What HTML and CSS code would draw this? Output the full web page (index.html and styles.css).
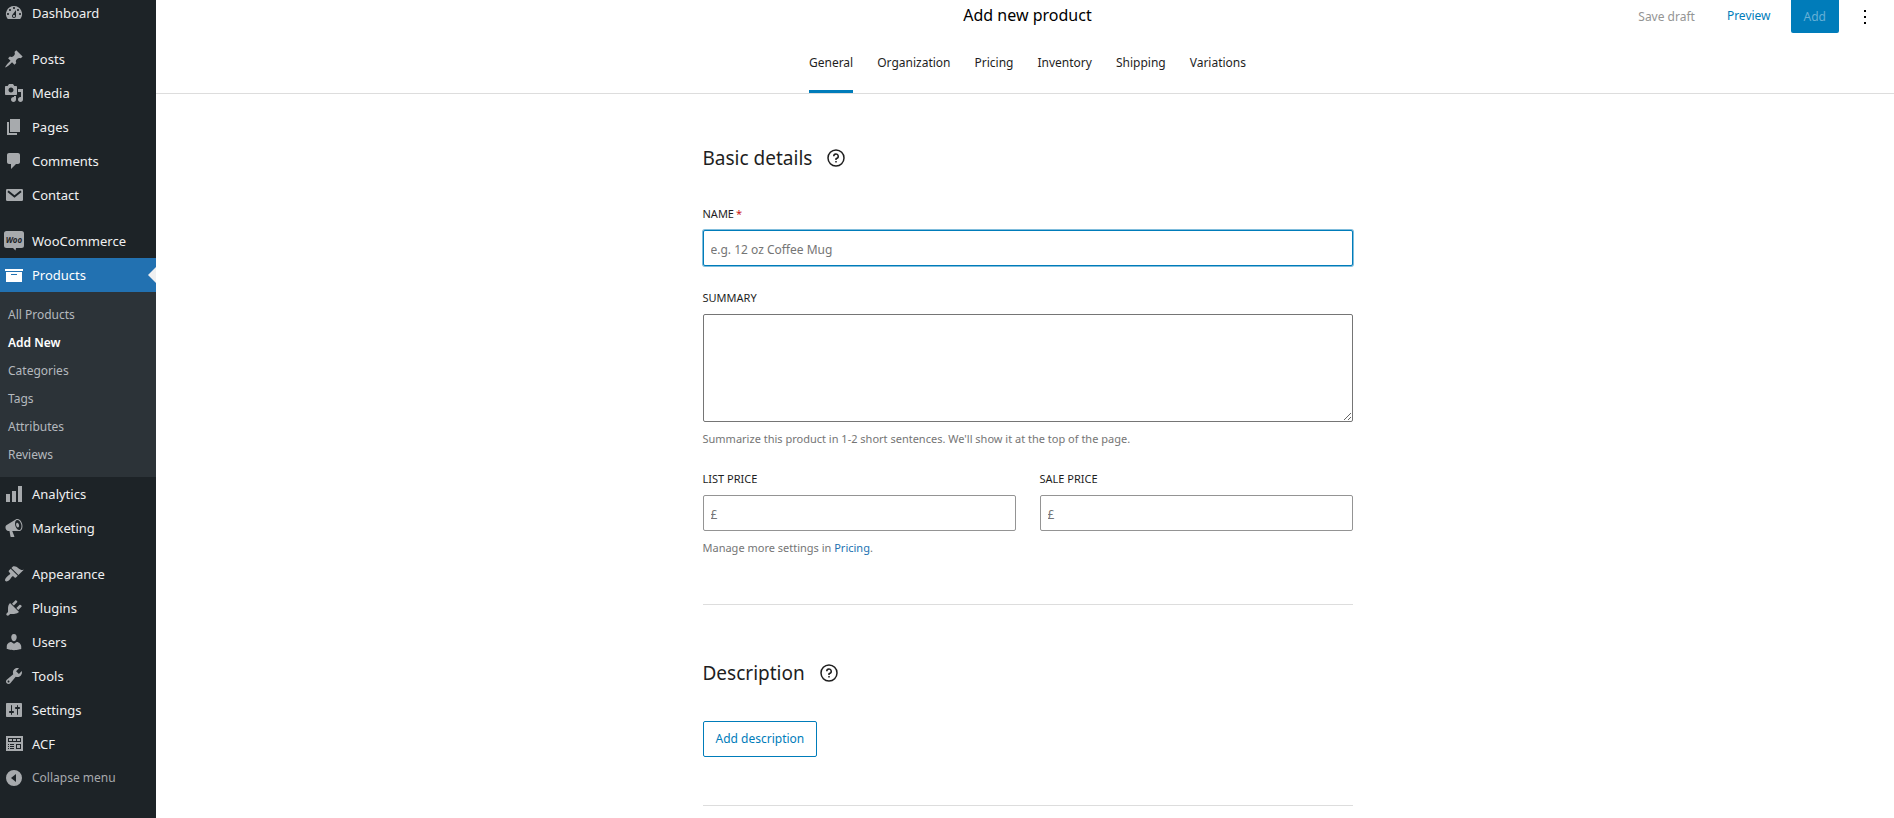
FILE: index.html
```html
<!DOCTYPE html>
<html lang="en">
<head>
<meta charset="utf-8">
<title>Add new product</title>
<link rel="stylesheet" href="styles.css">
</head>
<body>
<div class="app">
  <nav class="sidebar" aria-label="Main menu">
    <ul class="menu">
      <li><a class="menu-item" href="#"><svg class="icon" viewBox="0 0 20 20"><path fill-rule="evenodd" d="M3.76 16h12.48A7.998 7.998 0 0 0 10 3a7.998 7.998 0 0 0-6.24 13zM10 4c.55 0 1 .45 1 1s-.45 1-1 1-1-.45-1-1 .45-1 1-1zM6 6c.55 0 1 .45 1 1s-.45 1-1 1-1-.45-1-1 .45-1 1-1zm8 0c.55 0 1 .45 1 1s-.45 1-1 1-1-.45-1-1 .45-1 1-1zm-5.37 5.55L12 7v6c0 1.1-.9 2-2 2s-2-.9-2-2c0-.57.24-1.08.63-1.45zM4 10c.55 0 1 .45 1 1s-.45 1-1 1-1-.45-1-1 .45-1 1-1zm12 0c.55 0 1 .45 1 1s-.45 1-1 1-1-.45-1-1 .45-1 1-1zm-5 3c0-.55-.45-1-1-1s-1 .45-1 1 .45 1 1 1 1-.45 1-1z"/></svg>Dashboard</a></li>
      <li class="group-start"><a class="menu-item" href="#"><svg class="icon" viewBox="0 0 20 20"><path d="M10.44 3.02l1.82-1.82 6.36 6.35-1.83 1.82c-1.05-.68-2.48-.57-3.41.36l-.75.75c-.92.93-1.04 2.35-.35 3.41l-1.83 1.82-2.41-2.41-2.8 2.79c-.42.42-3.38 2.71-3.8 2.29s1.86-3.39 2.28-3.81l2.79-2.79L4.1 9.36l1.83-1.82c1.05.69 2.48.57 3.4-.36l.75-.75c.93-.92 1.05-2.35.36-3.41z"/></svg>Posts</a></li>
      <li><a class="menu-item" href="#"><svg class="icon" viewBox="0 0 20 20"><path fill-rule="evenodd" d="M13 11V4c0-.55-.45-1-1-1h-1.67L9 1H5L3.67 3H2c-.55 0-1 .45-1 1v7c0 .55.45 1 1 1h10c.55 0 1-.45 1-1zM7 4.5c1.38 0 2.5 1.12 2.5 2.5S8.38 9.5 7 9.5 4.5 8.38 4.5 7 5.62 4.5 7 4.5zM14 6h5v10.5c0 1.38-1.12 2.5-2.5 2.5S14 17.88 14 16.5s1.12-2.5 2.5-2.5c.17 0 .34.02.5.05V9h-3V6zm-4 8.05V13h2v3.5c0 1.38-1.12 2.5-2.5 2.5S7 17.88 7 16.5 8.12 14 9.5 14c.17 0 .34.02.5.05z"/></svg>Media</a></li>
      <li><a class="menu-item" href="#"><svg class="icon" viewBox="0 0 20 20"><path d="M6 15V2h10v13H6zm-1 1h8v2H3V5h2v11z"/></svg>Pages</a></li>
      <li><a class="menu-item" href="#"><svg class="icon" viewBox="0 0 20 20"><path d="M5 2h9c1.1 0 2 .9 2 2v7c0 1.1-.9 2-2 2h-2l-5 5v-5H5c-1.1 0-2-.9-2-2V4c0-1.1.9-2 2-2z"/></svg>Comments</a></li>
      <li><a class="menu-item" href="#"><svg class="icon" viewBox="0 0 20 20"><rect x="2" y="4" width="17" height="12" rx="1.2"/><path class="cut" d="M4 6.2l6.5 5.3L17 6.2"/></svg>Contact</a></li>
      <li class="group-start"><a class="menu-item" href="#"><svg class="icon" viewBox="0 0 20 20"><path d="M2.5 0h15A2.5 2.5 0 0 1 20 2.5v12a2.5 2.5 0 0 1-2.5 2.5H12l-.5 2.6L9 17H2.5A2.5 2.5 0 0 1 0 14.5v-12A2.5 2.5 0 0 1 2.5 0z"/><text class="badge-text" x="10" y="11.500">Woo</text></svg>WooCommerce</a></li>
      <li>
        <a class="menu-item current" href="#"><svg class="icon" viewBox="0 0 20 20"><path fill-rule="evenodd" d="M19 4v2H1V4h18zM2 7h16v10H2V7zm11 3V9H7v1h6z"/></svg>Products</a>
        <ul class="submenu">
          <li><a class="sub-item" href="#">All Products</a></li>
          <li><a class="sub-item active" href="#">Add New</a></li>
          <li><a class="sub-item" href="#">Categories</a></li>
          <li><a class="sub-item" href="#">Tags</a></li>
          <li><a class="sub-item" href="#">Attributes</a></li>
          <li><a class="sub-item" href="#">Reviews</a></li>
        </ul>
      </li>
      <li><a class="menu-item" href="#"><svg class="icon" viewBox="0 0 20 20"><path d="M18 18V2h-4v16h4zm-6 0V7H8v11h4zm-6 0v-8H2v8h4z"/></svg>Analytics</a></li>
      <li><a class="menu-item" href="#"><svg class="icon" viewBox="0 0 20 20"><path fill-rule="evenodd" d="M18.150 5.940c.46 1.620.38 3.220-.02 4.480-.42 1.280-1.260 2.180-2.300 2.480-.16.06-.26.06-.4.06-.06.02-.12.02-.18.02-.06.02-.14.02-.22.02h-6.800l2.220 5.500c.02.14-.06.26-.14.34-.08.1-.24.16-.34.16H6.950c-.1 0-.26-.06-.34-.16-.08-.08-.16-.2-.14-.34l-1-5.500H4.250l-.02-.02c-.5.06-1.080-.18-1.540-.62s-.88-1.080-1.060-1.880c-.24-.8-.2-1.560-.02-2.200.18-.62.58-1.080 1.060-1.300l.02-.02 9-5.400c.1-.06.18-.1.24-.16.06-.04.14-.08.24-.12.16-.08.28-.12.5-.18 1.040-.3 2.240.1 3.220.98s1.840 2.240 2.260 3.860zm-2.580 5.980h-.02c.4-.1.74-.34 1.040-.7.58-.7.86-1.760.86-3.040 0-.64-.1-1.300-.28-1.980-.34-1.360-1.020-2.500-1.780-3.240s-1.680-1.100-2.460-.88c-.82.22-1.400.96-1.700 2-.32 1.040-.28 2.360.06 3.720.38 1.360 1 2.500 1.800 3.240.78.74 1.620 1.100 2.480.88zm-2.540-7.080c.22-.04.42-.02.62.04.38.16.76.48 1.020 1s.42 1.200.42 1.780c0 .3-.04.56-.12.8-.18.48-.44.84-.86.94-.34.1-.8-.06-1.140-.4s-.64-.86-.78-1.500c-.18-.62-.12-1.240.02-1.720s.48-.84.82-.94z"/></svg>Marketing</a></li>
      <li class="group-start"><a class="menu-item" href="#"><svg class="icon" viewBox="0 0 20 20"><path d="M14.480 11.060L7.410 3.990l1.500-1.500c.5-.56 2.300-.47 3.510.32 1.210.8 1.430 1.280 2.910 2.100 1.180.64 2.450 1.260 4.450.85zm-.71.71L6.700 4.700 4.930 6.470c-.39.39-.39 1.020 0 1.410l1.060 1.060c.39.39.39 1.030 0 1.420-.6.6-1.430 1.110-2.210 1.690-.35.26-.7.53-1.010.84C1.430 14.230.4 16.080 1.400 17.070c.99 1 2.840-.03 4.180-1.360.31-.31.58-.66.85-1.020.57-.78 1.080-1.610 1.690-2.210.39-.39 1.020-.39 1.410 0l1.060 1.060c.39.39 1.020.39 1.410 0z"/></svg>Appearance</a></li>
      <li><a class="menu-item" href="#"><svg class="icon" viewBox="0 0 20 20"><path d="M13.110 4.360L9.870 7.600 8 5.730l3.240-3.240c.35-.34 1.050-.2 1.560.32.52.51.66 1.210.31 1.550zm-8 1.770l.91-1.120 9.010 9.010-1.190.84c-.71.71-2.630 1.160-3.820 1.160H6.140L4.900 17.260c-.59.59-1.540.59-2.120 0-.59-.58-.59-1.530 0-2.120l1.240-1.240v-3.880c0-1.130.4-3.190 1.090-3.890zm7.260 3.970l3.240-3.240c.34-.35 1.040-.21 1.550.31.52.51.66 1.210.31 1.550l-3.240 3.250z"/></svg>Plugins</a></li>
      <li><a class="menu-item" href="#"><svg class="icon" viewBox="0 0 20 20"><path d="M10 9.250c-2.270 0-2.730-3.440-2.730-3.440C7 4.020 7.820 2 9.970 2c2.160 0 2.980 2.020 2.710 3.810 0 0-.41 3.440-2.680 3.440zm0 2.570L12.720 10c2.390 0 4.520 2.330 4.520 4.530v2.490s-3.650 1.130-7.240 1.130c-3.650 0-7.240-1.130-7.240-1.130v-2.490c0-2.250 1.940-4.480 4.470-4.480z"/></svg>Users</a></li>
      <li><a class="menu-item" href="#"><svg class="icon" viewBox="0 0 20 20"><path fill-rule="evenodd" d="M16.680 9.770c-1.340 1.340-3.300 1.670-4.950.99l-5.410 6.520c-.99.99-2.590.99-3.580 0s-.99-2.590 0-3.570l6.520-5.420c-.68-1.650-.35-3.610.99-4.950 1.280-1.280 3.120-1.620 4.720-1.060l-2.890 2.890 2.820 2.820 2.860-2.870c.53 1.580.18 3.390-1.080 4.650zM3.810 16.210c.4.39 1.040.39 1.430 0 .4-.4.4-1.040 0-1.430-.39-.4-1.030-.4-1.430 0-.39.39-.39 1.030 0 1.430z"/></svg>Tools</a></li>
      <li><a class="menu-item" href="#"><svg class="icon" viewBox="0 0 20 20"><path fill-rule="evenodd" d="M18 16V4c0-.55-.45-1-1-1H3c-.55 0-1 .45-1 1v12c0 .55.45 1 1 1h14c.55 0 1-.45 1-1zM8 11h1c.55 0 1 .45 1 1s-.45 1-1 1H8v1.500c0 .28-.22.5-.5.5s-.5-.22-.5-.5V13H6c-.55 0-1-.45-1-1s.45-1 1-1h1V5.500c0-.28.22-.5.5-.5s.5.22.5.5V11zm5-2h-1c-.55 0-1-.45-1-1s.45-1 1-1h1V5.500c0-.28.22-.5.5-.5s.5.22.5.5V7h1c.55 0 1 .45 1 1s-.45 1-1 1h-1v5.500c0 .28-.22.5-.5.5s-.5-.22-.5-.5V9z"/></svg>Settings</a></li>
      <li><a class="menu-item" href="#"><svg class="icon" viewBox="0 0 20 20"><path fill-rule="evenodd" d="M2 2h17v15H2zM4 4v4h13V4zM5 5h3v2H5zM9 5h3v2H9zM13 5h3v2h-3zM4 10v1h1v-1zM6 10v1h4v-1zM4 12v1h1v-1zM6 12v1h4v-1zM4 14v1h1v-1zM6 14v1h4v-1zM12 10v5h5v-5zM13 11h3v3h-3z"/></svg>ACF</a></li>
      <li><button class="menu-item collapse" type="button"><svg class="icon" viewBox="0 0 20 20"><path fill-rule="evenodd" d="M10 2a8 8 0 1 1 0 16 8 8 0 0 1 0-16zM12 6L7 10l5 4z"/></svg>Collapse menu</button></li>
    </ul>
  </nav>

  <main class="main">
    <header class="header">
      <div class="topbar">
        <h1 class="title">Add new product</h1>
        <div class="actions">
          <button class="action muted" type="button" disabled>Save draft</button>
          <a class="action link" href="#">Preview</a>
          <button class="action primary" type="button" disabled>Add</button>
          <button class="action more" type="button" aria-label="More options"><svg class="dots" viewBox="0 0 24 24"><path d="M13 19h-2v-2h2v2zm0-6h-2v-2h2v2zm0-6h-2V5h2v2z"/></svg></button>
        </div>
      </div>
      <div class="tabs" role="tablist">
        <button class="tab selected" role="tab" aria-selected="true" type="button">General</button>
        <button class="tab" role="tab" type="button">Organization</button>
        <button class="tab" role="tab" type="button">Pricing</button>
        <button class="tab" role="tab" type="button">Inventory</button>
        <button class="tab" role="tab" type="button">Shipping</button>
        <button class="tab" role="tab" type="button">Variations</button>
      </div>
    </header>

    <form class="form">
      <section class="section">
        <h2 class="heading">Basic details
          <button class="help" type="button" aria-label="About basic details"><svg class="help-icon" viewBox="0 0 24 24"><path d="M12 4.750a7.250 7.250 0 100 14.500 7.250 7.250 0 000-14.500zM3.250 12a8.750 8.750 0 1117.500 0 8.750 8.750 0 01-17.500 0zM12 8.750a1.500 1.500 0 01.167 2.990c-.465.052-.917.44-.917 1.010V14h1.500v-.845A3 3 0 109 10.250h1.500a1.500 1.500 0 011.500-1.500zM11.250 15v1.500h1.500V15h-1.500z"/></svg></button>
        </h2>
        <div class="field">
          <label class="label" for="name">Name<span class="required">*</span></label>
          <input class="input focused" id="name" type="text" placeholder="e.g. 12 oz Coffee Mug">
        </div>
        <div class="field">
          <label class="label" for="summary">Summary</label>
          <textarea class="input area" id="summary"></textarea>
          <p class="hint">Summarize this product in 1-2 short sentences. We'll show it at the top of the page.</p>
        </div>
        <div class="prices">
          <div>
            <label class="label" for="list-price">List price</label>
            <input class="input price" id="list-price" type="text" placeholder="£">
            <p class="hint">Manage more settings in <a class="hint-link" href="#">Pricing</a>.</p>
          </div>
          <div>
            <label class="label" for="sale-price">Sale price</label>
            <input class="input price" id="sale-price" type="text" placeholder="£">
          </div>
        </div>
      </section>
      <section class="section">
        <h2 class="heading">Description
          <button class="help" type="button" aria-label="About the description"><svg class="help-icon" viewBox="0 0 24 24"><path d="M12 4.750a7.250 7.250 0 100 14.500 7.250 7.250 0 000-14.500zM3.250 12a8.750 8.750 0 1117.500 0 8.750 8.750 0 01-17.500 0zM12 8.750a1.500 1.500 0 01.167 2.990c-.465.052-.917.44-.917 1.010V14h1.500v-.845A3 3 0 109 10.250h1.500a1.500 1.500 0 011.500-1.500zM11.250 15v1.500h1.500V15h-1.500z"/></svg></button>
        </h2>
        <button class="secondary" type="button">Add description</button>
      </section>
    </form>
  </main>
</div>
</body>
</html>
```
FILE: styles.css
```css
* {
  box-sizing: border-box;
}

body {
  margin: 0;
  background: #fff;
  color: #1e1e1e;
  font-family: "Segoe UI", "Noto Sans", sans-serif;
  font-size: 12px;
  line-height: 16px;
}

button,
input,
textarea {
  font: inherit;
}

button {
  padding: 0;
  border: 0;
  background: none;
  color: inherit;
}

a {
  text-decoration: none;
}

ul {
  margin: 0;
  padding: 0;
  list-style: none;
}

.app {
  display: grid;
  grid-template-columns: 156px 1fr;
  height: 100vh;
  overflow: hidden;
}

/* Sidebar */
.sidebar {
  background: #1d2327;
}

.menu {
  margin-top: -4px;
}

.group-start {
  margin-top: 12px;
}

.menu-item {
  position: relative;
  display: flex;
  align-items: center;
  gap: 8px;
  width: 100%;
  height: 34px;
  padding-left: 4px;
  color: #f0f0f1;
  font-size: 13px;
}

.icon {
  width: 20px;
  height: 20px;
  fill: #a7aaad;
}

.cut {
  fill: none;
  stroke: #1d2327;
  stroke-width: 2;
}

.badge-text {
  fill: #1d2327;
  font-size: 8px;
  font-weight: 700;
  font-style: italic;
  text-anchor: middle;
}

.current {
  background: #2271b1;
  color: #fff;
}

.current .icon {
  fill: #fff;
}

.current::after {
  content: "";
  position: absolute;
  top: 9px;
  right: 0;
  border: 8px solid transparent;
  border-left-width: 0;
  border-right-color: #f0f0f1;
}

.submenu {
  padding: 9px 0 8px;
  background: #2c3338;
}

.sub-item {
  display: block;
  padding: 6px 8px;
  color: #b4b9be;
}

.active {
  color: #fff;
  font-weight: 600;
}

.collapse {
  color: #a7aaad;
  font-size: 12px;
}

/* Header */
.header {
  padding-left: 5px;
  border-bottom: 1px solid #ddd;
}

.topbar {
  display: grid;
  grid-template-columns: 1fr auto 1fr;
  height: 33px;
}

.title {
  grid-column: 2;
  margin: 0;
  color: #000;
  font-size: 16px;
  font-weight: 400;
  line-height: 30px;
}

.actions {
  display: flex;
  justify-content: flex-end;
  gap: 8px;
  padding-right: 11px;
}

.action {
  padding: 0 12px;
  line-height: 32px;
}

.muted {
  color: #949494;
}

.link {
  color: #007cba;
}

.primary {
  padding: 0 13px;
  border-radius: 0 0 2px 2px;
  background: #007cba;
  color: #66b0d6;
}

.more {
  display: flex;
  align-items: center;
  padding: 0 6px;
}

.dots {
  width: 24px;
  height: 24px;
}

.tabs {
  display: flex;
  justify-content: center;
  gap: 24px;
}

.tab {
  height: 60px;
  border-top: 3px solid transparent;
  border-bottom: 3px solid transparent;
}

.selected {
  border-bottom-color: #007cba;
}

/* Form */
.main {
  min-width: 0;
}

.form {
  max-width: 655px;
  margin: 0 auto;
  padding-left: 5px;
}

.section {
  padding: 48px 0;
  border-bottom: 1px solid #ddd;
}

.section + .section {
  padding-top: 52px;
}

.heading {
  display: flex;
  align-items: center;
  gap: 12px;
  margin: 0 0 32px;
  font-size: 19px;
  font-weight: 400;
  line-height: 32px;
}

.help,
.help-icon {
  display: block;
  width: 24px;
  height: 24px;
  fill: #1e1e1e;
}

.field {
  margin-bottom: 24px;
}

.label {
  display: block;
  margin-bottom: 8px;
  font-size: 11px;
  text-transform: uppercase;
}

.required {
  padding-left: 2px;
  color: #cc1818;
}

.input {
  display: block;
  width: 100%;
  height: 36px;
  padding: 2px 7px 0;
  border: 1px solid #757575;
  border-radius: 2px;
  background: #fff;
}

.input::placeholder {
  color: #757575;
}

.focused {
  border-color: #007cba;
  box-shadow: 0 0 0 1px #80bddc;
  outline: 0;
}

.area {
  height: 108px;
  resize: vertical;
}

.price {
  border-color: #949494;
}

.hint {
  margin: 9px 0 0;
  color: #757575;
  font-size: 11px;
}

.hint-link {
  color: #2271b1;
}

.prices {
  display: grid;
  grid-template-columns: 1fr 1fr;
  gap: 24px;
}

.secondary {
  height: 36px;
  padding: 0 12px;
  border: 1px solid #007cba;
  border-radius: 2px;
  color: #007cba;
}
```
